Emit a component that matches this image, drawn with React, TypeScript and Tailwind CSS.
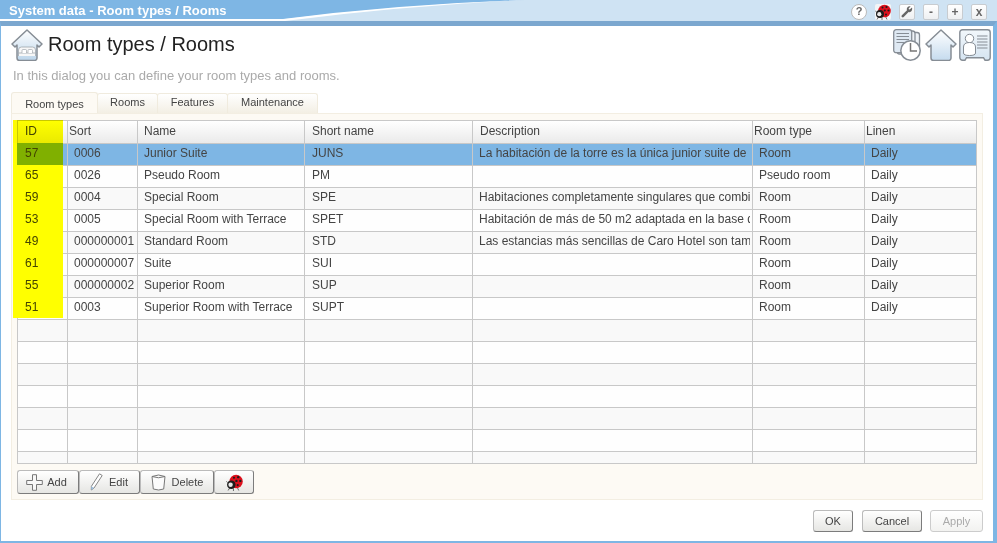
import React from "react";

type Row = { id?: string; sort?: string; name?: string; short?: string; desc?: string; type?: string; linen?: string };

const rows: Row[] = [
  { id: "57", sort: "0006", name: "Junior Suite", short: "JUNS", desc: "La habitación de la torre es la única junior suite de", type: "Room", linen: "Daily" },
  { id: "65", sort: "0026", name: "Pseudo Room", short: "PM", desc: "", type: "Pseudo room", linen: "Daily" },
  { id: "59", sort: "0004", name: "Special Room", short: "SPE", desc: "Habitaciones completamente singulares que combi", type: "Room", linen: "Daily" },
  { id: "53", sort: "0005", name: "Special Room with Terrace", short: "SPET", desc: "Habitación de más de 50 m2 adaptada en la base de", type: "Room", linen: "Daily" },
  { id: "49", sort: "000000001", name: "Standard Room", short: "STD", desc: "Las estancias más sencillas de Caro Hotel son tam", type: "Room", linen: "Daily" },
  { id: "61", sort: "000000007", name: "Suite", short: "SUI", desc: "", type: "Room", linen: "Daily" },
  { id: "55", sort: "000000002", name: "Superior Room", short: "SUP", desc: "", type: "Room", linen: "Daily" },
  { id: "51", sort: "0003", name: "Superior Room with Terrace", short: "SUPT", desc: "", type: "Room", linen: "Daily" },
  {}, {}, {}, {}, {}, {}, {},
];

function Ladybug({ size = 16 }: { size?: number }) {
  return (
    <svg width={size} height={size} viewBox="0 0 16 16">
      <path d="M3.500 13 2 15.500M7 13.500v2.500M10.500 12.500l1.500 3M1.500 8 .3 7" stroke="#555" strokeWidth="0.800" fill="none" />
      <circle cx="9.500" cy="7" r="6.300" fill="#dd0f1c" />
      <circle cx="5" cy="10" r="4" fill="#1d1d1d" />
      <circle cx="4.300" cy="10.200" r="2.100" fill="#e8e8e8" />
      <circle cx="7.500" cy="3.500" r="1" fill="#1d1d1d" />
      <circle cx="11.500" cy="3" r="1.100" fill="#1d1d1d" />
      <circle cx="9.800" cy="6.500" r="1.100" fill="#1d1d1d" />
      <circle cx="13.500" cy="6.500" r="1.100" fill="#1d1d1d" />
      <circle cx="11" cy="10.500" r="1" fill="#1d1d1d" />
    </svg>
  );
}

function HomeBed() {
  return (
    <svg width="32" height="32" viewBox="0 0 32 32">
      <defs>
        <linearGradient id="hb" x1="0" y1="0" x2="0" y2="1">
          <stop offset="0" stopColor="#ffffff" />
          <stop offset="1" stopColor="#bcd5ea" />
        </linearGradient>
      </defs>
      <path d="M1 15 16 1l15 14-3 3-2-2v13a2.500 2.500 0 0 1-2.500 2.500h-15A2.500 2.500 0 0 1 6 29V16l-2 2z" fill="url(#hb)" stroke="#868d95" strokeWidth="1.500" strokeLinejoin="round" />
      <path d="M7.500 27v-6q0-3 3-3h11q3 0 3 3v6M7.500 24h17" fill="#f7f7f7" stroke="#a0a6ac" strokeWidth="0.800" />
      <path d="M11 24v-2.500q0-1 1-1h2.500q1 0 1 1V24M17 24v-2.500q0-1 1-1h2.500q1 0 1 1V24" fill="#fff" stroke="#a0a6ac" strokeWidth="0.700" />
    </svg>
  );
}

function Home() {
  return (
    <svg width="32" height="32" viewBox="0 0 32 32">
      <defs>
        <linearGradient id="hm" x1="0" y1="0" x2="0" y2="1">
          <stop offset="0" stopColor="#ffffff" />
          <stop offset="1" stopColor="#c5dbee" />
        </linearGradient>
      </defs>
      <path d="M1 15 16 1l15 14-3 3-2-2v13a2.500 2.500 0 0 1-2.500 2.500h-15A2.500 2.500 0 0 1 6 29V16l-2 2z" fill="url(#hm)" stroke="#868d95" strokeWidth="1.500" strokeLinejoin="round" />
    </svg>
  );
}

function DocsClock() {
  return (
    <svg width="28" height="32" viewBox="0 0 28 32">
      <rect x="7.500" y="3.500" width="19" height="22" rx="2.500" fill="#eef3f8" stroke="#868d95" strokeWidth="1.300" />
      <rect x="4" y="2" width="18" height="23" rx="2.500" fill="#eef3f8" stroke="#868d95" strokeWidth="1.300" />
      <rect x="0.700" y="0.700" width="18" height="23" rx="2.500" fill="#dfe9f3" stroke="#868d95" strokeWidth="1.300" />
      <path d="M3.500 4.500h12.500M3.500 7.500h12.500M3.500 10.500h12.500M3.500 13.500h8" stroke="#868d95" strokeWidth="1.200" />
      <circle cx="17.500" cy="21.500" r="9.700" fill="#fff" stroke="#868d95" strokeWidth="1.500" />
      <path d="M17.500 14v8h6.500" fill="none" stroke="#777" strokeWidth="1.500" />
    </svg>
  );
}

function ContactCard() {
  return (
    <svg width="32" height="32" viewBox="0 0 32 32">
      <defs>
        <linearGradient id="cc" x1="0" y1="0" x2="0" y2="1">
          <stop offset="0" stopColor="#f2f7fb" />
          <stop offset="1" stopColor="#d5e4f1" />
        </linearGradient>
      </defs>
      <path d="M3.500 .8h25a2.700 2.700 0 0 1 2.700 2.700v25a2.700 2.700 0 0 1-2.700 2.700h-2.500l-1.500-2.500h-17L6 31.200H3.500A2.700 2.700 0 0 1 .8 28.500v-25A2.700 2.700 0 0 1 3.500 .8z" fill="url(#cc)" stroke="#868d95" strokeWidth="1.400" />
      <circle cx="10.500" cy="9.500" r="4.200" fill="#fff" stroke="#868d95" />
      <path d="M4.500 24v-6q0-4.500 6-4.500t6 4.500v6q0 2.500-6 2.500t-6-2.500z" fill="#fff" stroke="#868d95" />
      <path d="M18 7h10.500M18 10h10.500M18 13h10.500M18 16h10.500M18 19h10.500" stroke="#868d95" />
    </svg>
  );
}

function Plus() {
  return (
    <svg width="17" height="17" viewBox="0 0 17 17">
      <path d="M6.500.7h4v5.800h5.800v4h-5.800v5.800h-4v-5.800H.7v-4h5.800z" fill="#f8f8f8" stroke="#777" strokeLinejoin="round" />
    </svg>
  );
}

function Pencil() {
  return (
    <svg width="13" height="18" viewBox="0 0 13 18">
      <path d="M9.500.8 12.200 2.500 4 15 1.300 17 1.400 13.300z" fill="#fff" stroke="#777" strokeWidth="0.900" strokeLinejoin="round" />
      <path d="M1.400 13.300 4 15 1.300 17z" fill="#9cc0e0" />
    </svg>
  );
}

function Cup() {
  return (
    <svg width="15" height="17" viewBox="0 0 15 17">
      <path d="M1 2.500q6.500-3 13 0l-1.300 12.500q-5 2-10.400 0z" fill="#fbfbfb" stroke="#777" strokeLinejoin="round" />
      <path d="M1 2.500q6.500 2.500 13 0" fill="none" stroke="#777" />
    </svg>
  );
}

function Wrench() {
  return (
    <svg width="12" height="12" viewBox="0 0 12 12">
      <path d="M11 1.500 8.700 3.500 7.800 3.200 7.700 2.200 9.700.6Q7 -.3 6 2Q5.600 3.300 6 4.300L.9 9.300a1.200 1.200 0 0 0 1.800 1.700L7.600 6Q9.500 6.500 10.600 5Q11.500 3.500 11 1.500z" fill="#666" />
    </svg>
  );
}

function ToolButton({ children }: { children: React.ReactNode }) {
  return (
    <div className="w-[16px] h-[16px] flex items-center justify-center border border-[#c8ccd0] rounded-[2px] bg-gradient-to-b from-white to-[#eef0f2] text-[#666] text-[12px] font-bold leading-none">
      {children}
    </div>
  );
}

function Tab({ label, active, width }: { label: string; active?: boolean; width: string }) {
  return (
    <div
      className={`${width} -ml-[1px] first:ml-0 flex items-center justify-center border border-b-0 border-[#f0ebde] rounded-t-[3px] text-[#444] text-[11px] ${
        active ? "h-[21px] bg-[#fdfaf4] pt-[2px]" : "h-[20px] pb-[2px] bg-gradient-to-b from-white to-[#f3efe4]"
      }`}
    >
      {label}
    </div>
  );
}

function ActionButton({ children, width }: { children: React.ReactNode; width: string }) {
  return (
    <div className={`${width} h-[24px] flex items-center justify-center gap-1 border border-[#7c7c7c] border-t-[#bbbbbb] border-l-[#bbbbbb] rounded-[3px] bg-gradient-to-b from-white to-[#e6e6e3] text-[#444] text-[11px]`}>
      {children}
    </div>
  );
}

function DialogButton({ label, width, disabled }: { label: string; width: string; disabled?: boolean }) {
  return (
    <div
      className={`${width} h-[22px] flex items-center justify-center border rounded-[3px] text-[11px] bg-gradient-to-b from-white ${
        disabled
          ? "border-[#cccccc] to-[#f2f2f0] text-[#aaaaaa]"
          : "border-[#7c7c7c] border-t-[#bbbbbb] border-l-[#bbbbbb] to-[#e6e6e3] text-[#444]"
      }`}
    >
      {label}
    </div>
  );
}

const colWidths = ["w-[50px]", "w-[70px]", "w-[167px]", "w-[168px]", "w-[280px]", "w-[112px]", "w-[112px]"];

function Cell({ value, pad }: { value?: string; pad: string }) {
  return (
    <td className={`border border-[#c8c8c8] pb-[4px] leading-[14px] ${pad}`}>
      <div className="h-[14px] overflow-hidden whitespace-nowrap mr-[2px]">{value}</div>
    </td>
  );
}

function Th({ label, pad }: { label: string; pad: string }) {
  return <th className={`border border-[#c8c8c8] pb-[3px] leading-[14px] text-left font-normal ${pad}`}>{label}</th>;
}

export default function App() {
  return (
    <div className="w-[997px] h-[543px] flex flex-col overflow-hidden bg-white font-['Liberation_Sans',Arial,sans-serif]">
      {/* title bar */}
      <div className="relative h-[21px] shrink-0 bg-[#cfe3f3] flex items-center">
        <svg className="absolute left-0 top-0" width="997" height="21" viewBox="0 0 997 21">
          <path d="M0 0H525Q400 5 285 19H0z" fill="#7eb6e4" />
          <path d="M0 19H283Q400 4 525 0Q400 6 285 21H0z" fill="#fff" />
        </svg>
        <span className="relative ml-[9px] text-[13px] font-bold text-white">System data - Room types / Rooms</span>
        <div className="relative ml-auto mr-[10px] mt-[2px] flex items-center gap-[8px]">
          <div className="w-[16px] h-[16px] flex items-center justify-center rounded-full border border-[#bbbbbb] bg-white text-[#666] text-[11px] font-bold">?</div>
          <div className="w-[16px] h-[16px] rounded-[2px] bg-[#f3f5f7]">
            <Ladybug />
          </div>
          <ToolButton><Wrench /></ToolButton>
          <ToolButton>-</ToolButton>
          <ToolButton>+</ToolButton>
          <ToolButton>x</ToolButton>
        </div>
      </div>

      {/* dialog body */}
      <div className="flex-1 flex flex-col border-t-[5px] border-t-[#7ba7cf] border-l border-l-[#7eb6e4] border-r-[4px] border-r-[#7eb6e4] border-b-2 border-b-[#7eb6e4] px-[10px]">
        <div className="h-[33px] mt-[3px] flex items-start">
          <HomeBed />
          <h1 className="ml-[5px] text-[20px] leading-[30px] font-normal text-[#222]">Room types / Rooms</h1>
          <div className="ml-auto -mr-[8px] flex items-start">
            <DocsClock />
            <div className="ml-[4px]"><Home /></div>
            <div className="ml-[2px]"><ContactCard /></div>
          </div>
        </div>
        <p className="mt-[5px] ml-[2px] text-[13px] leading-[18px] text-[#aaaaaa]">In this dialog you can define your room types and rooms.</p>

        <div className="mt-[7px] h-[21px] flex items-end">
          <Tab label="Room types" active width="w-[87px]" />
          <Tab label="Rooms" width="w-[61px]" />
          <Tab label="Features" width="w-[71px]" />
          <Tab label="Maintenance" width="w-[91px]" />
        </div>

        {/* panel */}
        <div className="relative h-[387px] border border-[#f3eee2] bg-[#fdfaf4] px-[5px] pt-[6px]">
          <div className="h-[344px] w-[960px] overflow-hidden border-b border-[#c8c8c8]">
            <table className="table-fixed border-collapse w-[960px] text-[12px] text-[#444]">
              <colgroup>
                {colWidths.map((w, i) => (
                  <col key={i} className={w} />
                ))}
              </colgroup>
              <thead>
                <tr className="h-[23px] bg-gradient-to-b from-white to-[#e9e9e9]">
                  <Th label="ID" pad="pl-[7px]" />
                  <Th label="Sort" pad="pl-[1px]" />
                  <Th label="Name" pad="pl-[6px]" />
                  <Th label="Short name" pad="pl-[7px]" />
                  <Th label="Description" pad="pl-[7px]" />
                  <Th label="Room type" pad="pl-[1px]" />
                  <Th label="Linen" pad="pl-[1px]" />
                </tr>
              </thead>
              <tbody>
                {rows.map((r, i) => (
                  <tr key={i} className={`h-[22px] ${i === 0 ? "bg-[#7eb6e4]" : i % 2 === 0 ? "bg-[#f9f9f9]" : "bg-[#fefefe]"}`}>
                    <Cell pad="pl-[7px]" />
                    <Cell value={r.sort} pad="pl-[6px]" />
                    <Cell value={r.name} pad="pl-[6px]" />
                    <Cell value={r.short} pad="pl-[7px]" />
                    <Cell value={r.desc} pad="pl-[6px]" />
                    <Cell value={r.type} pad="pl-[6px]" />
                    <Cell value={r.linen} pad="pl-[6px]" />
                  </tr>
                ))}
              </tbody>
            </table>
          </div>

          <div className="mt-[6px] flex items-center">
            <ActionButton width="w-[62px]"><div className="-ml-[3px]"><Plus /></div><span>Add</span></ActionButton>
            <ActionButton width="w-[61px]"><div className="-ml-[1px]"><Pencil /></div><span className="ml-[2px]">Edit</span></ActionButton>
            <ActionButton width="w-[74px]"><Cup /><span className="ml-[2px]">Delete</span></ActionButton>
            <ActionButton width="w-[40px]"><Ladybug size={17} /></ActionButton>
          </div>

          {/* yellow marker drawn over the ID column */}
          <div className="absolute left-[1px] top-[6px] w-[50px] text-[12px] text-[#444400]">
            <div className="h-[23px] bg-[#ffff00] mix-blend-multiply" />
            {rows.slice(0, 8).map((r, i) => (
              <div key={i} className={`bg-[#ffff00] ${i === 7 ? "h-[21px]" : "h-[22px]"}`}>
                <div className={`h-full ml-[4px] pl-[8px] pb-[2px] flex items-center ${i === 0 ? "bg-[#80b000]" : ""}`}>{r.id}</div>
              </div>
            ))}
          </div>
        </div>

        <div className="mt-[10px] flex justify-end gap-[8px]">
          <DialogButton label="OK" width="w-[40px] mr-[1px]" />
          <DialogButton label="Cancel" width="w-[60px]" />
          <DialogButton label="Apply" width="w-[53px]" disabled />
        </div>
      </div>
    </div>
  );
}
